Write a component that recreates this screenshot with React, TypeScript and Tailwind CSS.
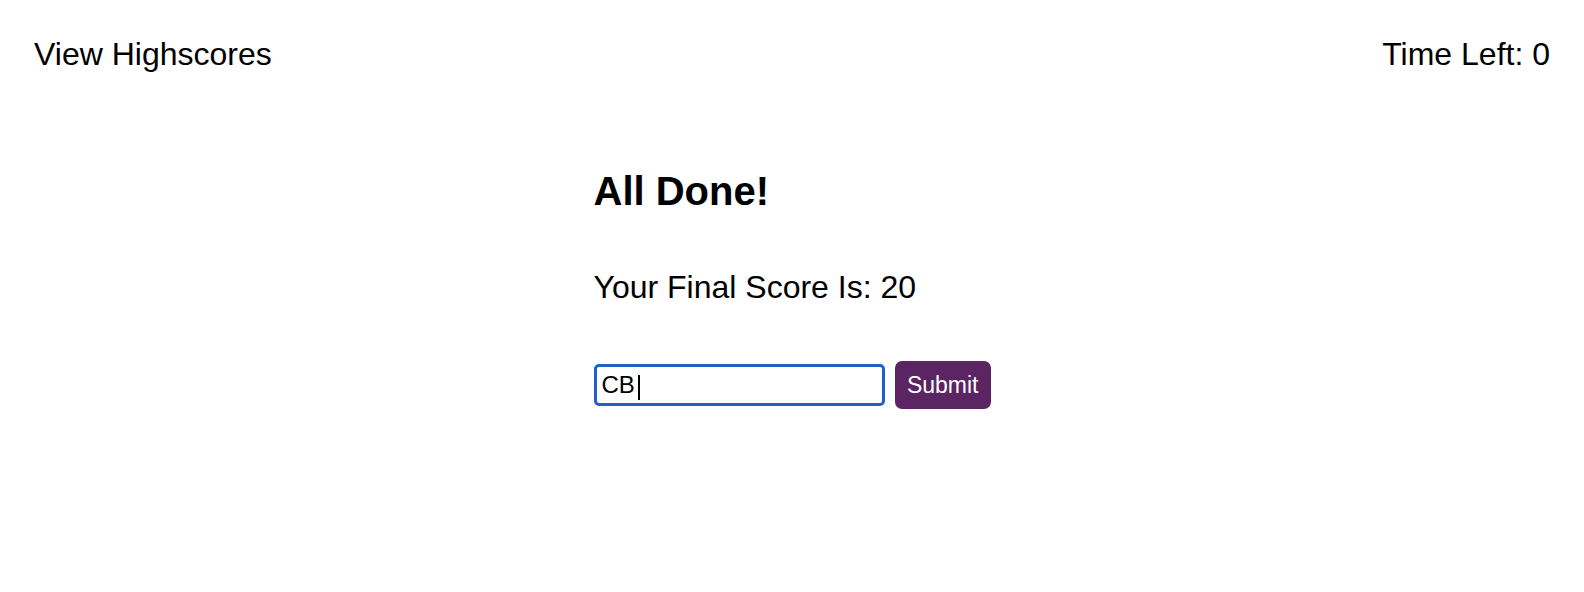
export default function App() {
  return (
    <div className="min-h-[592px] bg-white text-black font-['Liberation_Sans',Arial,sans-serif]">
      <header className="flex justify-between px-[34px] pt-[36px] text-[32px] leading-[37px]">
        <a href="#" className="cursor-pointer">View Highscores</a>
        <span>Time Left: 0</span>
      </header>

      <main className="w-[397px] mx-auto">
        <h1 className="mt-[95px] text-[40px] leading-[46px] font-bold">All Done!</h1>
        <p className="mt-[55px] text-[32px] leading-[37px]">Your Final Score Is: 20</p>

        <form className="mt-[55px] flex items-center gap-[10px]" onSubmit={(e) => e.preventDefault()}>
          <div className="relative flex-1">
            <input
              type="text"
              defaultValue="CB"
              className="w-full h-[42px] border-[3px] border-[#2160c8] rounded-[5px] pl-[5px] text-[24px] text-black outline-none"
            />
            {/* caret */}
            <span className="absolute left-[44px] top-[11px] w-[2px] h-[25px] bg-black" />
          </div>
          <button
            type="submit"
            className="h-[48px] px-[12px] rounded-[7px] bg-[#5a2562] text-white text-[23px] leading-none"
          >
            Submit
          </button>
        </form>
      </main>
    </div>
  );
}
